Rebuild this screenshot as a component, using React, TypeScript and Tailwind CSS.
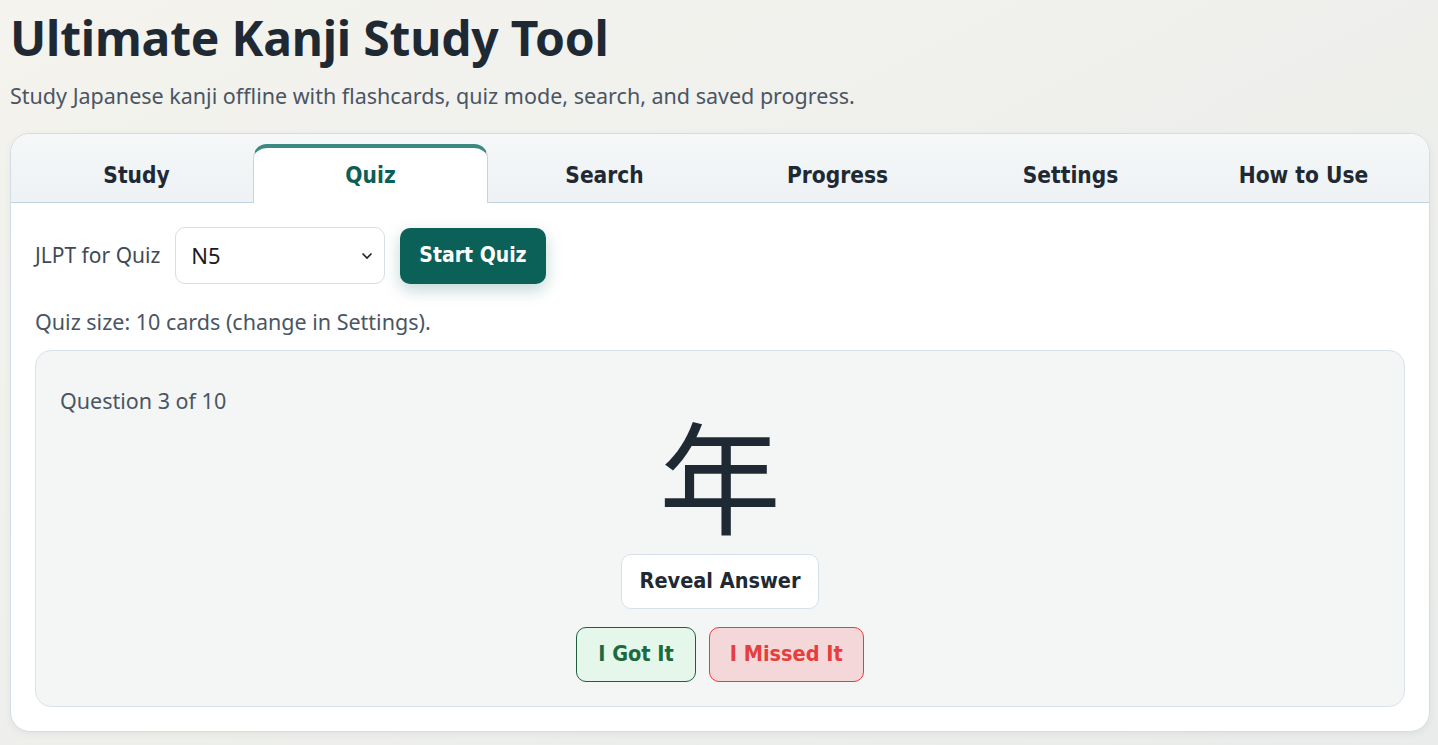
import { useState } from 'react'

const TABS = ['Study', 'Quiz', 'Search', 'Progress', 'Settings', 'How to Use']

const uiFont = { fontFamily: '"Noto Sans", "Noto Sans CJK JP", sans-serif' }
const btnFont = { fontFamily: '"DejaVu Sans Condensed", "DejaVu Sans", sans-serif' }

export default function App() {
  const [active, setActive] = useState('Quiz')
  const [level, setLevel] = useState('N5')

  return (
    <div
      className="min-h-[745px] bg-gradient-to-br from-[#f4f3ee] to-[#e9ecea] pl-[10px] pr-[8px] pt-[10px] pb-[14px] text-[#1f2933]"
      style={uiFont}
    >
      <h1 className="text-[48px] font-bold leading-[56px] tracking-[-0.2px] text-[#1f2933]">
        Ultimate Kanji Study Tool
      </h1>
      <p className="mt-[16px] text-[21.5px] leading-[28px] text-[#4a5563]">
        Study Japanese kanji offline with flashcards, quiz mode, search, and saved progress.
      </p>

      {/* main card */}
      <div className="mt-[23px] overflow-hidden rounded-[20px] border border-[#d3dde8] bg-white shadow-[0_2px_8px_rgba(0,0,0,0.05)]">
        {/* tab bar */}
        <div className="flex bg-gradient-to-b from-[#f5f7f8] to-[#eef2f4] px-[9px] pt-[10px] border-b border-[#c3d3e3]">
          {TABS.map((t) => {
            const isActive = t === active
            return (
              <button
                key={t}
                onClick={() => setActive(t)}
                style={btnFont}
                className={`-mb-px flex h-[59px] flex-1 items-center justify-center rounded-t-[14px] text-[22.5px] font-bold ${
                  isActive
                    ? 'border-x border-t-[4px] border-x-[#c8d4e0] border-t-[#3a8a82] bg-white pt-0 text-[#0b5f56]'
                    : 'pt-[4px] text-[#1f2933]'
                }`}
              >
                {t}
              </button>
            )
          })}
        </div>

        {/* panel */}
        <div className="px-[24px] pt-[24px] pb-[24px]">
          <div className="flex items-center">
            <label className="text-[21px] text-[#3f4a56]">JLPT for Quiz</label>
            <div className="relative ml-[15px]">
              <select
                value={level}
                onChange={(e) => setLevel(e.target.value)}
                className="h-[57px] w-[210px] appearance-none rounded-[10px] border border-[#d6dee6] bg-white pl-[15px] text-[22px] text-[#1a1a1a] outline-none"
              >
                {['N5', 'N4', 'N3', 'N2', 'N1'].map((n) => (
                  <option key={n}>{n}</option>
                ))}
              </select>
              <svg
                className="pointer-events-none absolute right-[12px] top-1/2 -translate-y-1/2"
                width="12"
                height="8"
                viewBox="0 0 12 8"
                fill="none"
              >
                <path d="M1.5 1.5L6 6L10.5 1.5" stroke="#222" strokeWidth="1.6" />
              </svg>
            </div>
            <button
              style={btnFont}
              className="ml-[15px] h-[56px] rounded-[10px] bg-[#0b6157] px-[19px] text-[21px] font-bold text-white shadow-[0_6px_16px_rgba(11,97,87,0.25)]"
            >
              Start Quiz
            </button>
          </div>

          <p className="mt-[24px] text-[21.5px] leading-[28px] text-[#4a5563]">
            Quiz size: 10 cards (change in Settings).
          </p>

          {/* quiz card */}
          <div className="mt-[14px] rounded-[16px] border border-[#d9e2ec] bg-[#f4f6f6] px-[24px] pt-[36px] pb-[24px]">
            <p className="text-[21.5px] leading-[28px] text-[#4a5563]">Question 3 of 10</p>
            <div className="flex flex-col items-center">
              <div
                className="-mt-[21px] text-[122px] leading-[156px] text-[#1f2933]"
                style={{ fontFamily: '"Noto Sans CJK JP", sans-serif' }}
              >
                年
              </div>
              <button
                style={btnFont}
                className="mt-[4px] h-[55px] rounded-[10px] border border-[#d6e0ea] bg-white px-[18px] text-[21.5px] font-bold text-[#1f2933]"
              >
                Reveal Answer
              </button>
              <div className="mt-[18px] flex gap-[13px]">
                <button
                  style={btnFont}
                  className="h-[55px] rounded-[10px] border border-[#1f5f3d] bg-[#e5f6eb] px-[21px] text-[21.5px] font-bold text-[#1b6a3e]"
                >
                  I Got It
                </button>
                <button
                  style={btnFont}
                  className="h-[55px] rounded-[10px] border border-[#e53e3e] bg-[#f4d7d9] px-[20px] text-[21.5px] font-bold text-[#e53e3e]"
                >
                  I Missed It
                </button>
              </div>
            </div>
          </div>
        </div>
      </div>
    </div>
  )
}
